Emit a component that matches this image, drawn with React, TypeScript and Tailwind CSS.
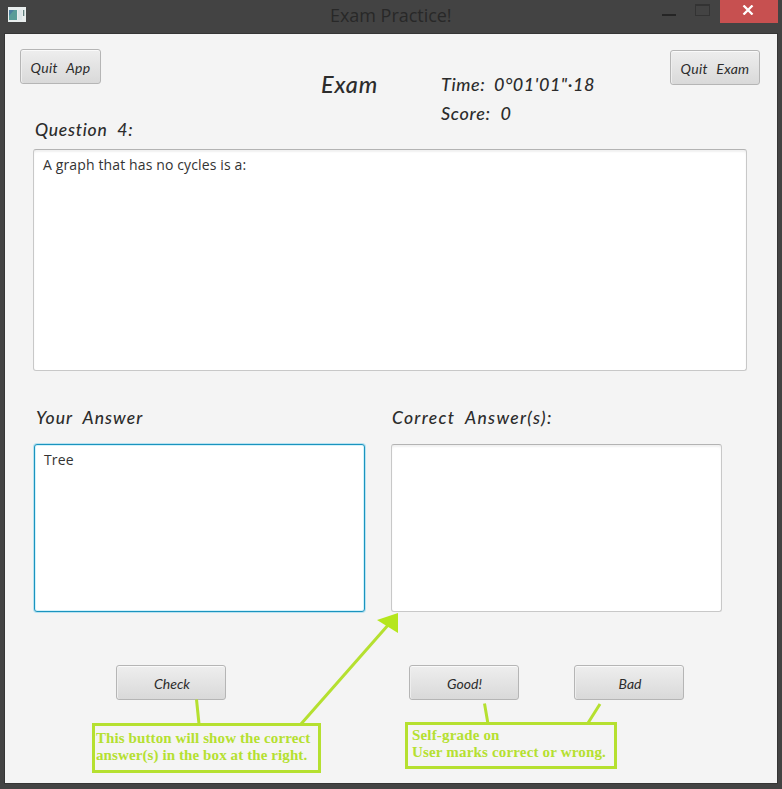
import type { ReactNode } from "react";

const hand = "font-['Lato',sans-serif] italic whitespace-pre text-[#2c2c2c]";

function Button({ className, children }: { className: string; children: ReactNode }) {
  return (
    <button
      className={`${hand} flex shrink-0 items-center justify-center rounded-[3px] border border-[#b5b5b5] bg-linear-to-b from-[#eeeeee] to-[#d9d9d9] shadow-[inset_0_1px_0_#fafafa,inset_1px_0_0_#eeeeee] h-[35px] pt-[3px] text-[14px] leading-none ${className}`}
    >
      {children}
    </button>
  );
}

function TitleBar() {
  return (
    <header className="flex h-[34px] shrink-0 items-start">
      <svg className="mt-[7px] ml-[8px] shrink-0" width="18" height="15" viewBox="0 0 18 15">
        <rect width="18" height="15" fill="#e9eeee" />
        <rect x="1" y="3" width="8" height="10" fill="#5a9c98" />
        <path d="M1 3h5l-5 6z" fill="#4c7fa0" />
        <rect x="10" y="3" width="4" height="10" fill="#dce6e8" />
        <rect x="15" y="3" width="1.3" height="6" fill="#61817f" />
      </svg>
      <h1 className="ml-[304px] w-[140px] pt-[3px] font-['Open_Sans','Noto_Sans',sans-serif] text-[18px] leading-[25px] tracking-[-0.03px] whitespace-nowrap text-[#282828]">
        Exam Practice!
      </h1>
      <div className="ml-[192px] mt-[14px] h-[2px] w-[14px] shrink-0 bg-[#252525]" />
      <div className="ml-[19px] mt-[4px] h-[12px] w-[15px] shrink-0 border border-t-2 border-[#333333]" />
      <div className="ml-[10px] flex h-[23px] w-[58px] shrink-0 items-center justify-center bg-[#c75050]">
        <svg className="mr-[2px] mb-[4px]" width="12" height="10" viewBox="0 0 12 10">
          <path d="M1.5 0.5 10.5 9.5M10.5 0.5 1.5 9.5" stroke="#fff" strokeWidth="2.3" />
        </svg>
      </div>
    </header>
  );
}

const area =
  "shrink-0 rounded-[3px] border bg-white font-['Open_Sans','Noto_Sans',sans-serif] text-[14px] leading-[20px] tracking-[0.13px] text-[#333333] px-[9px] pt-[5px]";
const note =
  "shrink-0 border-[3px] border-[#b5e030] font-['Liberation_Serif',serif] font-bold text-[15px] leading-[17px] whitespace-pre text-[#b5e030]";

export default function App() {
  return (
    <div className="relative flex h-[789px] w-[782px] flex-col overflow-hidden bg-[#434343] pr-[5px] pb-[6px] pl-[5px]">
      <div className="-mx-[5px]">
        <TitleBar />
      </div>
      <main className="flex min-h-0 flex-1 flex-col bg-[#f4f4f4] shadow-[0_0_0_1px_#353535]">
        <div className="flex h-[81px] shrink-0 items-start">
          <Button className="mt-[15px] ml-[15px] w-[81px] tracking-[0.3px] [word-spacing:5px]">Quit App</Button>
          <h2 className={`${hand} mt-[35px] ml-[220px] w-[120px] text-[23.5px] leading-[30px] font-medium tracking-[0.8px]`}>
            Exam
          </h2>
          <div className={`${hand} w-[229px] pt-[36px] text-[18px] leading-[29px] font-medium`}>
            <p className="tracking-[0.55px] [word-spacing:4px]">{"Time: 0°01'01\"·18"}</p>
            <p className="tracking-[0.7px] [word-spacing:5px]">Score: 0</p>
          </div>
          <Button className="mt-[16px] w-[90px] tracking-[0.3px] [word-spacing:5px]">Quit Exam</Button>
        </div>
        <label className={`${hand} ml-[30px] h-[34px] shrink-0 text-[17.5px] leading-[29px] font-medium tracking-[0.75px] [word-spacing:5px]`}>
          Question 4:
        </label>
        <div className={`${area} ml-[28px] h-[222px] w-[714px] border-[#c8c8c8] border-t-[#b3b3b3] shadow-[inset_0_2px_2px_#f1f1f1]`}>
          A graph that has no cycles is a:
        </div>
        <div className="mt-[33px] ml-[29px] flex shrink-0 gap-[26px]">
          <section className="w-[331px]">
            <h3 className={`${hand} h-[40px] pl-[2px] text-[17.5px] leading-[28px] font-medium tracking-[1.05px] [word-spacing:5px]`}>
              Your Answer
            </h3>
            <div className={`${area} h-[168px] w-[331px] border-[#1b93be] shadow-[0_0_0_1px_#b9e2f0,inset_0_0_0_1px_#d2f2fb]`}>
              Tree
            </div>
          </section>
          <section className="w-[331px]">
            <h3 className={`${hand} h-[40px] pl-px text-[17.5px] leading-[28px] font-medium tracking-[1.3px] [word-spacing:5px]`}>
              Correct Answer(s):
            </h3>
            <div className={`${area} h-[168px] w-[331px] border-[#c8c8c8] border-t-[#b3b3b3] shadow-[inset_0_2px_2px_#f1f1f1]`} />
          </section>
        </div>
        <div className="mt-[53px] ml-[111px] flex shrink-0">
          <Button className="w-[110px] pl-[2px]">Check</Button>
          <Button className="ml-[183px] w-[110px] pl-px">Good!</Button>
          <Button className="ml-[55px] w-[110px] pl-[2px]">Bad</Button>
        </div>
        <div className="mt-[22px] ml-[87px] flex shrink-0 items-start gap-[84px]">
          <p className={`${note} mt-px h-[50px] w-[229px] pt-[4px] pl-px tracking-[0.1px]`}>
            {"This button will show the correct\nanswer(s) in the box at the right."}
          </p>
          <p className={`${note} h-[47px] w-[212px] pt-[2px] pl-[4px] tracking-[0.17px]`}>
            {"Self-grade on\nUser marks correct or wrong."}
          </p>
        </div>
      </main>
      {/* Callout lines joining the notes to their controls */}
      <svg className="pointer-events-none absolute inset-0" width="782" height="789" viewBox="0 0 782 789">
        <g stroke="#b5e030" strokeWidth="3" fill="none">
          <path d="M196.500 699.500 199 724M301 724 389 624M484.500 703.500 488 724M600 704 588 723" />
        </g>
        <path d="M398 613V633L377 620Z" fill="#b5e61d" />
      </svg>
    </div>
  );
}
